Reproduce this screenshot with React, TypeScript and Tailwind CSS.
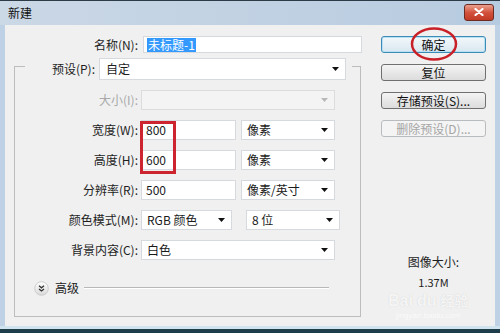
import React from 'react';

const Arrow = ({ disabled }: { disabled?: boolean }) => (
  <svg width="7" height="4" viewBox="0 0 7 4" className="shrink-0">
    <path d="M0 0h7L3.5 4z" fill={disabled ? '#b8b8b8' : '#111'} />
  </svg>
);

const Field = ({ w, value }: { w: string; value: string }) => (
  <div className={`${w} h-[20px] bg-white border border-[#d6dade] flex items-center pl-[4px] text-[#1a1a1a]`}>
    {value}
  </div>
);

const Select = ({ w, value, disabled }: { w: string; value?: string; disabled?: boolean }) => (
  <div
    className={`${w} h-[20px] border flex items-center justify-between pl-[5px] pr-[6px] ${
      disabled ? 'bg-[#f4f4f4] border-[#dcdcdc]' : 'bg-white border-[#d6dade] text-[#1a1a1a]'
    }`}
  >
    <span>{value}</span>
    <Arrow disabled={disabled} />
  </div>
);

const Row = ({ label, disabled, children }: { label: string; disabled?: boolean; children: React.ReactNode }) => (
  <div className="flex items-center h-[20px]">
    <div className={`w-[125px] text-right pr-[2px] ${disabled ? 'text-[#a8a8a8]' : 'text-[#1e1e1e]'}`}>{label}</div>
    <div className="ml-[1px] flex items-center gap-[5px]">{children}</div>
  </div>
);

const Button = ({ label, variant }: { label: string; variant?: 'default' | 'disabled' }) => {
  const cls =
    variant === 'default'
      ? 'border-[#3c8cb8] bg-gradient-to-b from-[#f2f8fb] to-[#d9e7ef] text-[#111] shadow-[inset_0_0_0_1px_#b8e0f2]'
      : variant === 'disabled'
      ? 'border-[#b9bcbf] bg-[#f4f4f4] text-[#a5a5a5]'
      : 'border-[#707070] bg-gradient-to-b from-[#f4f4f4] to-[#dcdcdc] text-[#111]';
  return (
    <div className={`w-[105px] h-[17px] rounded-[3px] border flex items-center justify-center leading-none ${cls}`}>
      {label}
    </div>
  );
};

export default function App() {
  return (
    <div className="relative w-[500px] h-[333px] overflow-hidden flex flex-col bg-[#bfd2e5] text-[12px] font-['Noto_Sans_CJK_SC','Microsoft_YaHei',sans-serif] select-none">
      {/* title bar */}
      <div className="h-[25px] shrink-0 border-t border-[#2d3b47] bg-gradient-to-r from-[#cbd8e6] to-[#b7cbe0] flex items-center justify-between pl-[8px] pr-[6px]">
        <span className="text-[#111] text-[12px]">新建</span>
        <div className="w-[30px] h-[17px] -mt-[2px] rounded-[3px] border border-[#6e2b22] bg-gradient-to-b from-[#e9a08f] via-[#d2523d] to-[#c23a24] flex items-center justify-center">
          <svg width="10" height="8" viewBox="0 0 10 8">
            <path d="M1.5 1l7 6M8.5 1l-7 6" stroke="#fff" strokeWidth="2.2" strokeLinecap="round" />
          </svg>
        </div>
      </div>

      {/* body */}
      <div className="flex-1 flex mx-[5px] bg-[#f0f0f0] text-[#1e1e1e]">
        {/* left column */}
        <div className="w-[360px] flex flex-col pt-[11px]">
          <div className="flex items-center h-[17px]">
            <div className="w-[133px] text-right">名称(N):</div>
            <div className="ml-[5px] w-[219px] h-[17px] bg-white border border-[#d6dade] flex items-center pl-[3px]">
              <span className="bg-[#3399ff] text-white px-[1px] leading-[14px]">未标题-1</span>
            </div>
          </div>

          <div className="mt-[13px] ml-[9px] w-[347px] h-[251px] border border-[#bdbdbd] flex flex-col">
            {/* preset row over the border */}
            <div className="-mt-[9px] ml-[10px] pr-[6px] w-fit flex items-center bg-[#f0f0f0]">
              <div className="w-[70px] text-right">预设(P):</div>
              <div className="ml-[4px] w-[247px] h-[22px] bg-white border border-[#d6dade] flex items-center justify-between pl-[6px] pr-[6px]">
                <span>自定</span>
                <Arrow />
              </div>
            </div>

            <div className="mt-[10px] flex flex-col gap-[10px]">
              <Row label="大小(I):" disabled>
                <Select w="w-[194px]" disabled />
              </Row>
              <Row label="宽度(W):">
                <Field w="w-[95px]" value="800" />
                <Select w="w-[94px]" value="像素" />
              </Row>
              <Row label="高度(H):">
                <Field w="w-[95px]" value="600" />
                <Select w="w-[94px]" value="像素" />
              </Row>
              <Row label="分辨率(R):">
                <Field w="w-[95px]" value="500" />
                <Select w="w-[94px]" value="像素/英寸" />
              </Row>
              <Row label="颜色模式(M):">
                <Select w="w-[91px]" value="RGB 颜色" />
                <div className="w-[4px]" />
                <Select w="w-[94px]" value="8 位" />
              </Row>
              <Row label="背景内容(C):">
                <Select w="w-[194px]" value="白色" />
              </Row>
            </div>

            <div className="mt-[20px] h-[16px] flex items-center ml-[19px] mr-[31px]">
              <svg width="15" height="15" viewBox="0 0 15 15" className="shrink-0">
                <defs>
                  <linearGradient id="cg" x1="0" y1="0" x2="0" y2="1">
                    <stop offset="0" stopColor="#ffffff" />
                    <stop offset="1" stopColor="#d9d9d9" />
                  </linearGradient>
                </defs>
                <circle cx="7.5" cy="7.5" r="6.8" fill="url(#cg)" stroke="#c4c4c4" strokeWidth="0.8" />
                <path d="M5 4.8l2.5 2 2.5-2M5 8l2.5 2 2.5-2" fill="none" stroke="#333" strokeWidth="1.3" />
              </svg>
              <span className="ml-[6px] text-[#222]">高级</span>
              <div className="ml-[5px] flex-1 h-[2px] border-t border-[#b8b8b8] border-b border-b-white" />
            </div>
          </div>
        </div>

        {/* right column */}
        <div className="flex-1 flex flex-col pl-[16px] pt-[11px]">
          <div className="flex flex-col gap-[11px]">
            <Button label="确定" variant="default" />
            <Button label="复位" />
            <Button label="存储预设(S)..." />
            <Button label="删除预设(D)..." variant="disabled" />
          </div>
          <div className="mt-[117px] w-[105px] flex flex-col items-center text-[#1e1e1e]">
            <div className="leading-[16px]">图像大小:</div>
            <div className="mt-[4px] leading-[16px] text-[11px]">1.37M</div>
          </div>
        </div>
      </div>

      {/* bottom frame */}
      <div className="h-[7px] shrink-0 flex flex-col">
        <div className="h-[3px] bg-[#cfe4ee]" />
        <div className="flex-1 bg-[#1f3c4b]" />
      </div>

      {/* red annotation marks */}
      <div className="absolute left-[140px] top-[121px] w-[36px] h-[53px] border-[3px] border-[#cc2530]" />
      <svg className="absolute left-[409px] top-[26px]" width="50" height="36" viewBox="0 0 50 36">
        <ellipse cx="25" cy="18" rx="22" ry="15.5" fill="none" stroke="#c91f27" strokeWidth="2.5" />
      </svg>

      {/* watermark */}
      <div className="absolute left-[388px] top-[293px] flex flex-col items-center text-white/80 font-['Liberation_Sans',sans-serif]">
        <div className="flex items-baseline gap-[4px] text-[16px] font-bold leading-none [text-shadow:0_0_1px_#c8c8c8]">
          <span>Bai</span>
          <span>du</span>
          <span className="font-['Noto_Sans_CJK_SC',sans-serif] text-[14px]">经验</span>
        </div>
        <div className="text-[8px] leading-none mt-[3px] text-white/70">jingyan.baidu.com</div>
      </div>
    </div>
  );
}
